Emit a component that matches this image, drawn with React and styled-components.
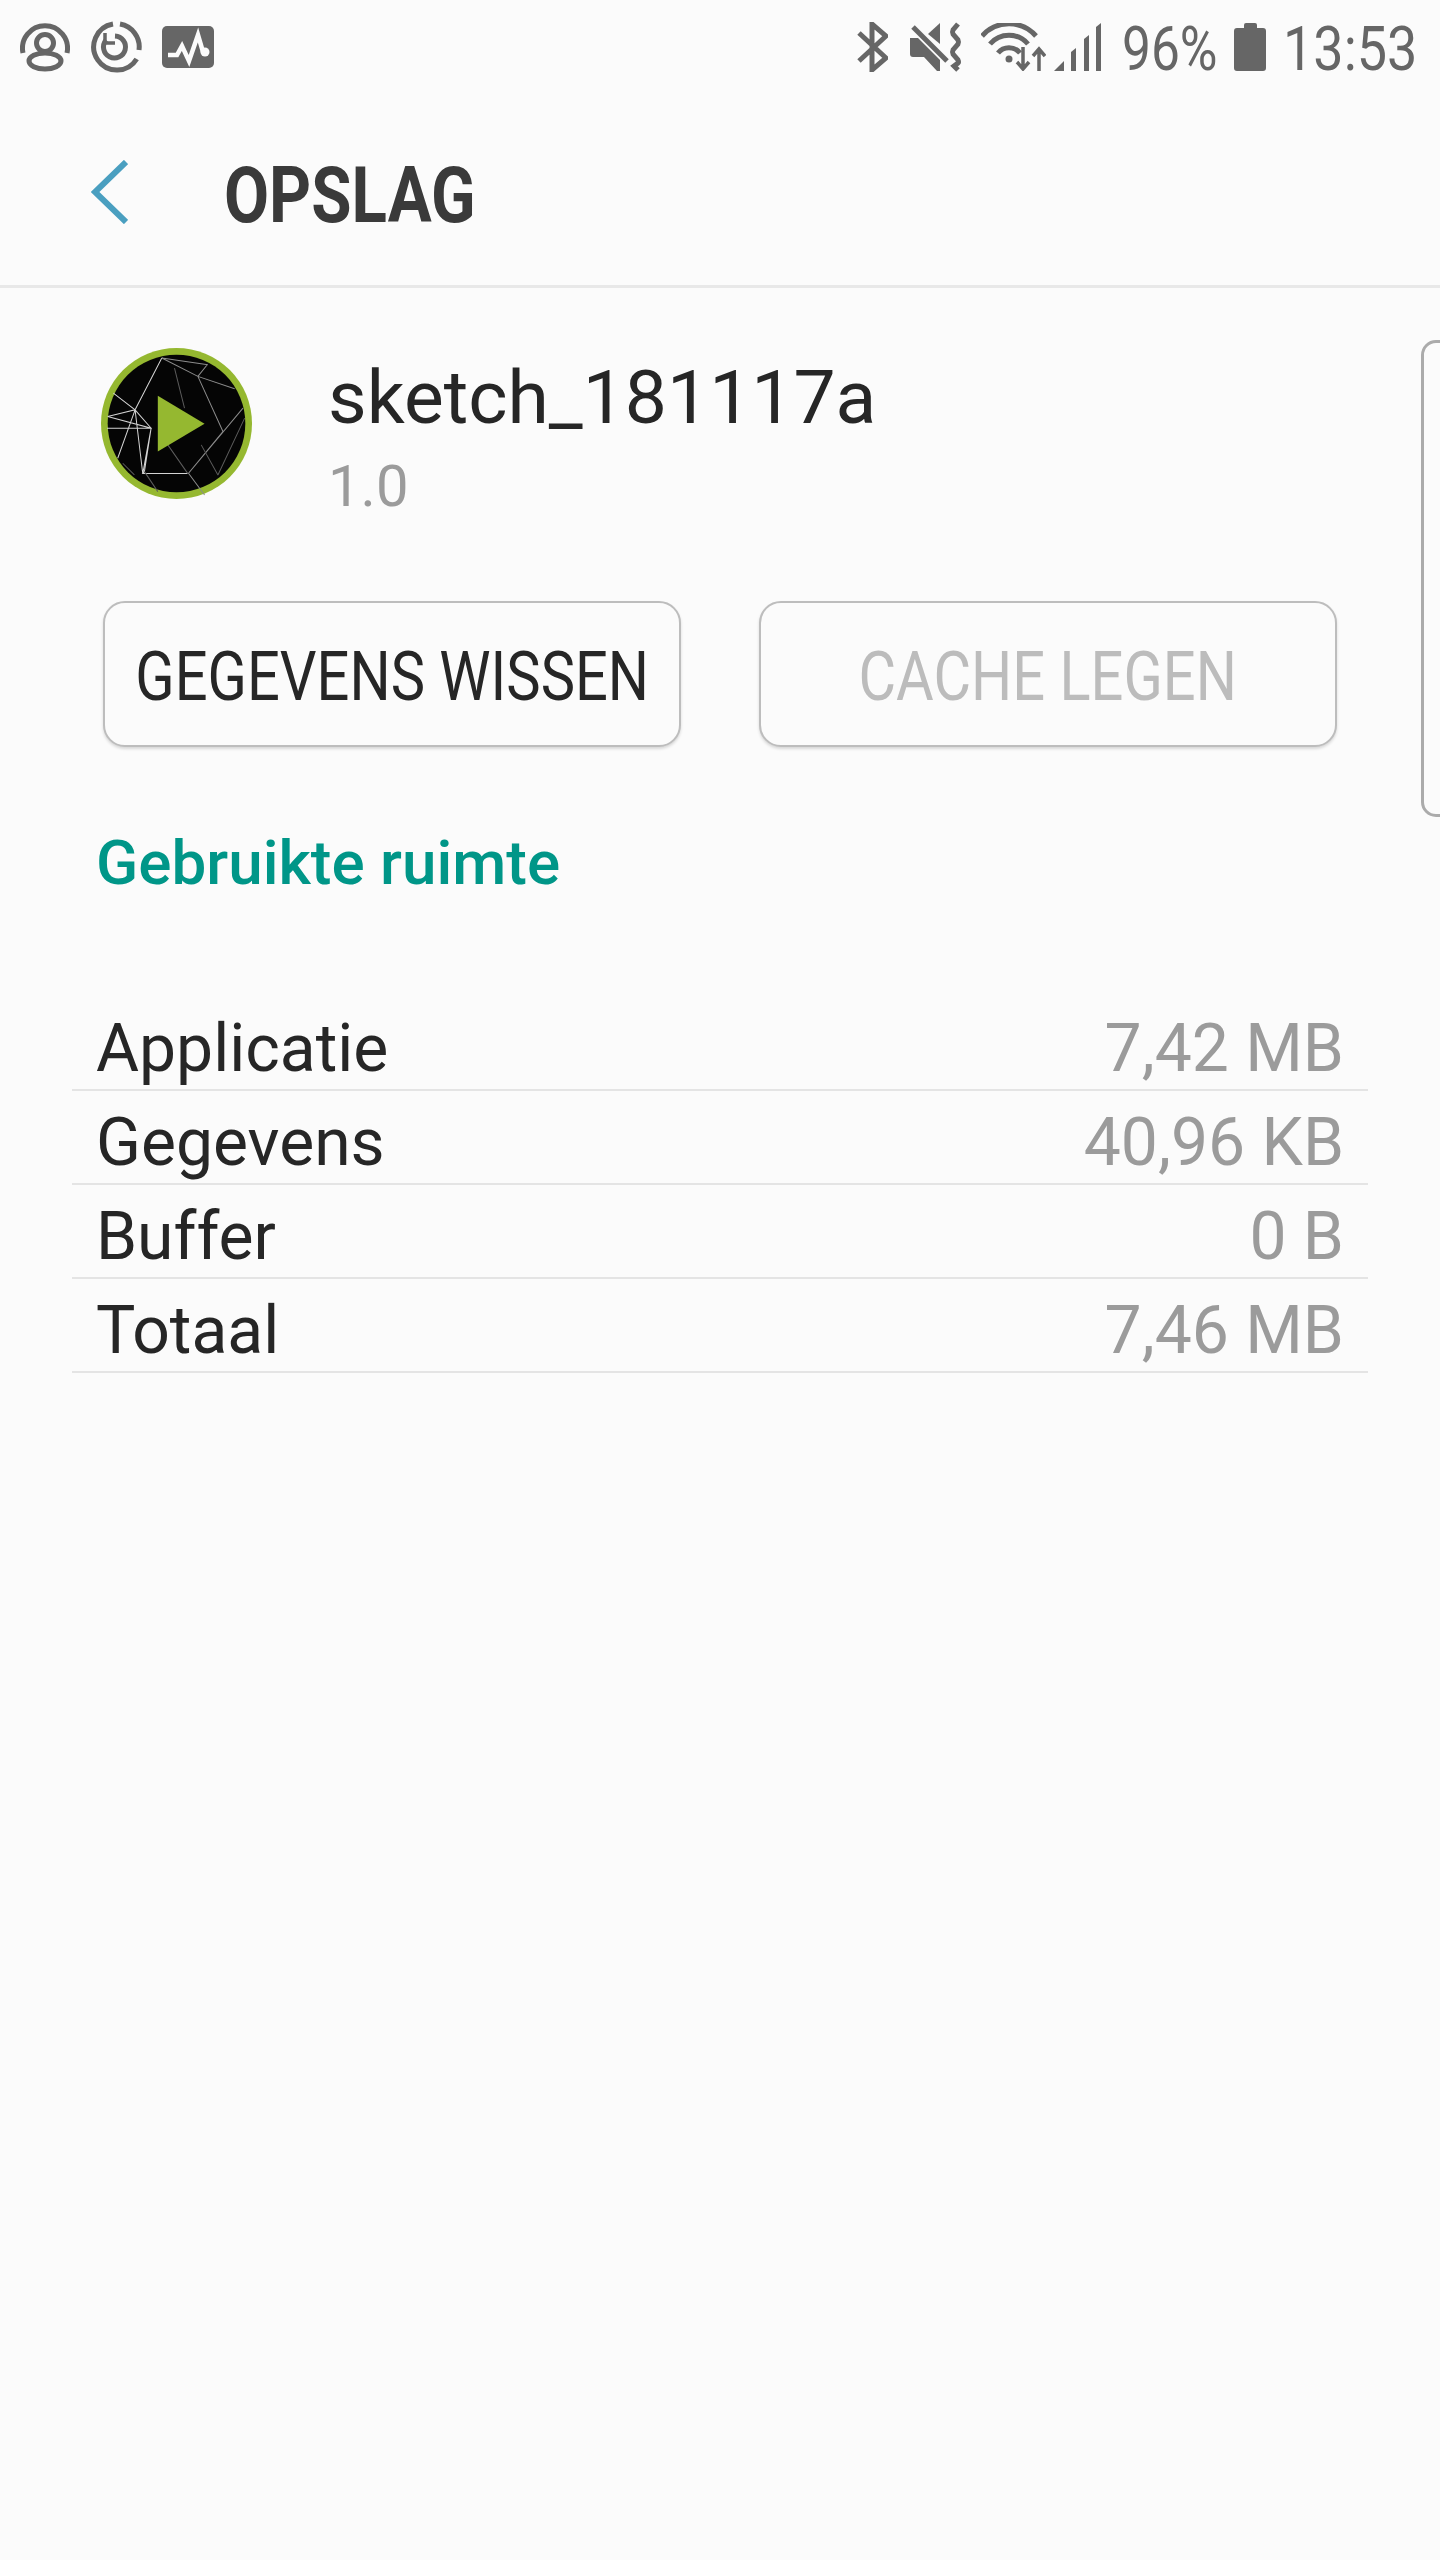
import React from 'react';
import styled, { createGlobalStyle } from 'styled-components';

const Global = createGlobalStyle`
  html, body { margin: 0; padding: 0; background: #fbfbfb; }
  body { font-family: Roboto, "Liberation Sans", sans-serif; }
`;

const Page = styled.div`
  position: relative;
  width: 1440px;
  min-height: 2560px;
  background: #fbfbfb;
  overflow: hidden;
`;

const StatusBar = styled.div`
  height: 94px;
  display: flex;
  justify-content: space-between;
  align-items: center;
  padding: 0 28px 0 20px;
  box-sizing: border-box;
`;

const StatusGroup = styled.div`
  display: flex;
  align-items: center;
`;

const StatusText = styled.span`
  display: inline-block;
  font-size: 62px;
  line-height: 60px;
  color: #666;
  width: ${(p) => p.w}px;
  margin-left: ${(p) => p.ml || 0}px;
  margin-top: 4px;
  white-space: nowrap;
  transform: scaleX(${(p) => p.sx});
  transform-origin: left center;
`;

const Header = styled.div`
  height: 194px;
  box-sizing: border-box;
  display: flex;
  align-items: center;
  padding-left: 91px;
  border-bottom: 3px solid #e8e8e8;
`;

const BackIcon = styled.svg`
  width: 37px;
  height: 64px;
  margin-top: 5px;
`;

const Title = styled.h1`
  margin: 12px 0 0 96px;
  font-size: 77px;
  font-weight: 700;
  line-height: 80px;
  color: #3a3a3a;
  transform: scaleX(0.85);
  transform-origin: left center;
`;

const AppInfo = styled.div`
  display: flex;
  align-items: flex-start;
  padding: 60px 0 0 101px;
`;

const Logo = styled.svg`
  width: 151px;
  height: 151px;
  flex: none;
`;

const AppText = styled.div`
  margin-left: 76px;
  margin-top: 7px;
`;

const AppName = styled.div`
  font-size: 75px;
  line-height: 84px;
  color: #262626;
`;

const AppVersion = styled.div`
  font-size: 58px;
  line-height: 68px;
  margin-top: 13px;
  color: #9b9b9b;
`;

const Buttons = styled.div`
  display: flex;
  gap: 78px;
  padding: 81px 0 0 103px;
`;

const ActionButton = styled.button`
  width: 578px;
  height: 146px;
  box-sizing: border-box;
  display: flex;
  align-items: center;
  justify-content: center;
  background: #fbfbfb;
  border: 2px solid #bdbdbd;
  border-radius: 22px;
  box-shadow: 0 2px 3px rgba(0, 0, 0, 0.14);
  padding: 6px 0 0;
  font-family: inherit;
  font-size: 68px;
  color: ${(p) => (p.disabled ? '#bcbcbc' : '#262626')};
  white-space: nowrap;
  overflow: hidden;
`;

const Squeeze = styled.span`
  flex: none;
  transform: scaleX(0.85);
`;

const SectionTitle = styled.h2`
  margin: 81px 0 0 96px;
  font-size: 62px;
  line-height: 70px;
  font-weight: 500;
  color: #009688;
`;

const Table = styled.div`
  margin: 99px 72px 0;
`;

const Row = styled.div`
  height: 94px;
  box-sizing: border-box;
  display: flex;
  justify-content: space-between;
  align-items: center;
  padding: 10px 24px 0;
  border-bottom: 2px solid #e4e4e4;
  font-size: 66px;
`;

const RowLabel = styled.span`
  color: #262626;
`;

const RowValue = styled.span`
  color: #9b9b9b;
`;

const SidePanel = styled.div`
  position: absolute;
  left: 1421px;
  top: 340px;
  width: 40px;
  height: 477px;
  box-sizing: border-box;
  border: 3px solid #ababab;
  border-radius: 15px;
`;

const grey = '#666';
const lime = '#95b830';

const PersonIcon = () => (
  <svg width="50" height="50" viewBox="0 0 50 50" fill="none" stroke={grey} strokeWidth="5">
    <path d="M3 31A22.5 22.5 0 1 1 47 31" />
    <circle cx="25" cy="21" r="8.5" />
    <ellipse cx="25" cy="39" rx="16" ry="8" />
  </svg>
);

const SyncIcon = () => (
  <svg width="52" height="52" viewBox="0 0 52 52" fill="none" stroke={grey} strokeWidth="5" style={{ marginLeft: 20 }}>
    <path d="M23 3A23.2 23.2 0 1 0 46.7 38" />
    <path d="M30 3A23.2 23.2 0 0 1 49 29" />
    <path d="M16 19A11 11 0 1 0 25 15" />
    <path d="M15 12V22H25" strokeWidth="3.5" />
  </svg>
);

const ActivityIcon = () => (
  <svg width="52" height="42" viewBox="0 0 52 42" style={{ marginLeft: 20 }}>
    <rect width="52" height="42" rx="5" fill={grey} />
    <path d="M6 29H15L20 20L27 35L36 9L41 26" fill="none" stroke="#fbfbfb" strokeWidth="4.5" />
    <circle cx="43" cy="26" r="4.5" fill="#fbfbfb" />
  </svg>
);

const BluetoothIcon = () => (
  <svg width="31" height="50" viewBox="0 0 31 50" fill="none" stroke={grey} strokeWidth="5">
    <path d="M2 11L29 36L15 48V2L29 14L2 39" />
  </svg>
);

const MuteIcon = () => (
  <svg width="56" height="50" viewBox="0 0 56 50" style={{ marginLeft: 20 }}>
    <path d="M2 16H10L32 38V49H29L16 35H5Q2 35 2 32Z" fill={grey} />
    <path d="M20 12L32 1V22Z" fill={grey} />
    <path d="M5 5L39 39" stroke={grey} strokeWidth="5" />
    <path d="M50 2L45 8Q44 10 45 12L50 18Q51 20 50 22L45 28Q44 30 45 32L50 38Q51 40 50 41L46 44L50 48" fill="none" stroke={grey} strokeWidth="5" />
  </svg>
);

const WifiIcon = () => (
  <svg width="65" height="48" viewBox="0 0 65 48" fill="none" stroke={grey} strokeWidth="5" style={{ marginLeft: 17 }}>
    <path d="M1 13A36 36 0 0 1 55 13" />
    <path d="M9 21A25 25 0 0 1 47 21" />
    <path d="M17 30A14 14 0 0 1 39 30" />
    <circle cx="28" cy="36" r="3.5" fill={grey} stroke="none" />
    <path d="M42 24V46M36 39L42 46L48 39" strokeWidth="3.5" />
    <path d="M58 48V28M52 33L58 26L64 33" strokeWidth="3.5" />
  </svg>
);

const SignalIcon = () => (
  <svg width="47" height="48" viewBox="0 0 47 48" style={{ marginLeft: 8 }}>
    <path d="M0 48L10 38V48Z" fill={grey} />
    <path d="M17 48V29L22 25V48Z" fill={grey} />
    <path d="M30 48V16L35 12V48Z" fill={grey} />
    <path d="M42 48V4L47 0V48Z" fill={grey} />
  </svg>
);

const BatteryIcon = () => (
  <svg width="32" height="48" viewBox="0 0 32 48" style={{ marginLeft: 18 }}>
    <path d="M10 5V2Q10 0 12 0H21Q23 0 23 2V5H29Q32 5 32 8V45Q32 48 29 48H3Q0 48 0 45V8Q0 5 3 5Z" fill={grey} />
  </svg>
);

const AppLogo = () => (
  <Logo viewBox="0 0 452 452">
    <circle cx="226" cy="226" r="226" fill={lime} />
    <circle cx="226" cy="226" r="206" fill="#050505" />
    <g fill="none" stroke="#d4d4d4" strokeWidth="3">
      <path d="M182 30L102 185L20 205M37 135L102 185L150 240H18M20 205L150 240L130 370L125 376H260M102 185L50 330M102 185L125 376M150 240L125 376" />
      <path d="M182 30L290 85L400 122M290 85L365 250L262 375L310 440M425 180L262 375M290 85L318 50M182 30L320 50" stroke="#8c8c8c" />
      <path d="M260 376L200 290M300 290L350 380M430 210L350 380M130 370L170 430M100 380L65 345M220 60L250 180" stroke="#5c5c5c" />
    </g>
    <path d="M170 143L310 227L170 310Z" fill={lime} />
  </Logo>
);

const rows = [
  ['Applicatie', '7,42 MB'],
  ['Gegevens', '40,96 KB'],
  ['Buffer', '0 B'],
  ['Totaal', '7,46 MB'],
];

export default function App() {
  return (
    <Page>
      <Global />
      <StatusBar>
        <StatusGroup>
          <PersonIcon />
          <SyncIcon />
          <ActivityIcon />
        </StatusGroup>
        <StatusGroup>
          <BluetoothIcon />
          <MuteIcon />
          <WifiIcon />
          <SignalIcon />
          <StatusText w={94} ml={21} sx={0.83}>96%</StatusText>
          <BatteryIcon />
          <StatusText w={129} ml={17} sx={0.87}>13:53</StatusText>
        </StatusGroup>
      </StatusBar>
      <Header>
        <BackIcon viewBox="0 0 37 64" fill="none" stroke="#4a9fc0" strokeWidth="6">
          <path d="M35 2L4 32L35 62" />
        </BackIcon>
        <Title>OPSLAG</Title>
      </Header>
      <AppInfo>
        <AppLogo />
        <AppText>
          <AppName>sketch_181117a</AppName>
          <AppVersion>1.0</AppVersion>
        </AppText>
      </AppInfo>
      <Buttons>
        <ActionButton><Squeeze>GEGEVENS WISSEN</Squeeze></ActionButton>
        <ActionButton disabled><Squeeze>CACHE LEGEN</Squeeze></ActionButton>
      </Buttons>
      <SectionTitle>Gebruikte ruimte</SectionTitle>
      <Table>
        {rows.map(([label, value]) => (
          <Row key={label}>
            <RowLabel>{label}</RowLabel>
            <RowValue>{value}</RowValue>
          </Row>
        ))}
      </Table>
      <SidePanel />
    </Page>
  );
}
